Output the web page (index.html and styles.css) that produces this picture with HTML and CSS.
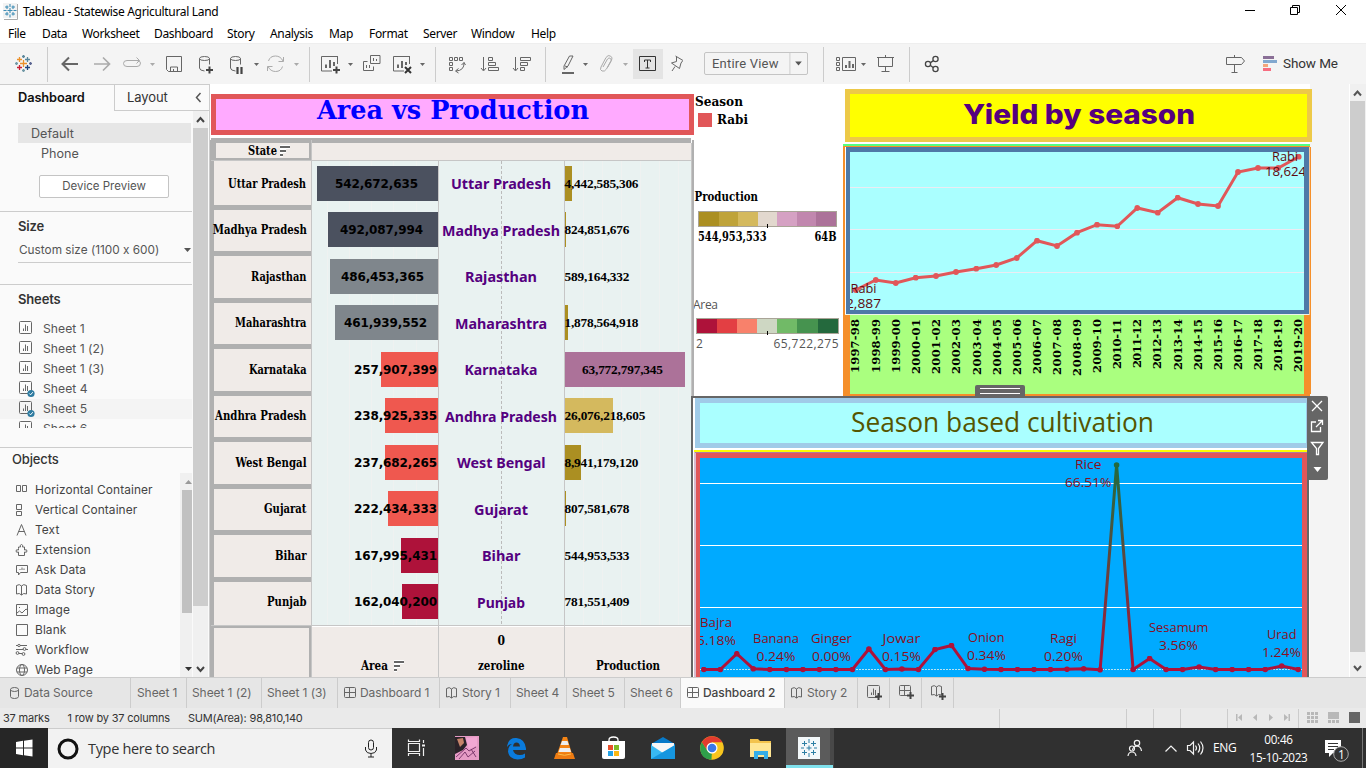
FILE: index.html
```html
<!DOCTYPE html>
<html lang="en">
<head>
<meta charset="utf-8">
<title>Tableau - Statewise Agricultural Land</title>
<link rel="stylesheet" href="styles.css">
</head>
<body>
<svg class="defs" width="0" height="0" aria-hidden="true">
  <defs>
    <g id="sheet" fill="none" stroke="#666"><rect x=".5" y=".5" width="12" height="12" rx="1"/><path d="M4.500 10V7.500M6.500 10V3.500M8.500 10V5"/></g>
    <g id="check"><circle cx="12" cy="12.500" r="3.600" fill="#2e7ba0"/><path d="M10.300 12.500l1.300 1.300 2.200-2.600" fill="none" stroke="#fff"/></g>
    <g id="dash" fill="none" stroke="#666"><rect x=".5" y=".5" width="11" height="10" rx="1"/><path d="M.5 5.500h11M5.500.5v10"/></g>
    <g id="story" fill="none" stroke="#666"><path d="M.5 1.500Q3.500-.5 5.500 2 7.500-.5 10.500 1.500V10Q7.500 8.500 5.500 11 3.500 8.500.5 10ZM5.500 2v9"/></g>
    <path id="plus" d="M0 3.500h7M3.500 0v7" fill="none" stroke="#444" stroke-width="2"/>
    <path id="down" d="M0 0h5l-2.500 3z"/>
    <path id="cross" d="M-2.500 0h5M0-2.500v5" fill="none"/>
    <g id="sortmark"><path d="M0 1h10M0 5h6M0 9h3" stroke="#fff" stroke-width="4"/><path d="M0 1h10M0 5h6M0 9h3" stroke="#666" stroke-width="2"/></g>
  </defs>
</svg>
<div class="window">
  <header class="titlebar">
    <svg width="18" height="18" viewBox="0 0 18 18"><path d="M0 0h14v15H0z" fill="#f3f3f3"/><path d="M14.500 1v15.500H1" stroke="#aaa" fill="none"/><g stroke="#3f8db5" stroke-width="1.100" transform="translate(-1 -1)"><path d="M5.500 8.500h5M8 6v5M8 2v3M8 12.500v3M1.500 8.500h3M11.500 8.500h3M3 5h3.500M5 3.500v3.500M9.500 5H13M11 3.500v3.500M3 12h3.500M5 10v3.500M9.500 12H13M11 10v3.500"/></g></svg>
    <span class="apptitle">Tableau - Statewise Agricultural Land</span>
    <svg class="winbtns" width="120" height="24" viewBox="1240 0 120 24" fill="none" stroke="#000"><path d="M1245 10.500h10M1290.500 7.500h7v7h-7zM1292.500 7V5.500h7v7H1298M1336 5l10 10M1346 5l-10 10"/></svg>
  </header>
  <nav class="menubar"><span>File</span><span>Data</span><span>Worksheet</span><span>Dashboard</span><span>Story</span><span>Analysis</span><span>Map</span><span>Format</span><span>Server</span><span>Window</span><span>Help</span></nav>
  <div class="toolbar">
    <svg width="48" height="41" viewBox="0 43 48 41"><g stroke-width="1.300"><path d="M20 63.500h7M23.500 60v7" stroke="#eb912c"/><use href="#cross" x="19.500" y="59.500" stroke="#eb912c"/><use href="#cross" x="27.500" y="59.500" stroke="#59879b"/><use href="#cross" x="19.500" y="67.500" stroke="#c72035"/><use href="#cross" x="27.500" y="67.500" stroke="#1f457e"/><path d="M22 56.500h3M23.500 55v3" stroke="#5b879b"/><path d="M22 70.500h3M23.500 69v3" stroke="#7199a6"/><path d="M15 63.500h3M16.500 62v3" stroke="#7199a6"/><path d="M29 63.500h3M30.500 62v3" stroke="#5c6692"/></g><path d="M47.500 47v35" stroke="#ccc"/></svg>
    <svg width="262" height="41" viewBox="48 43 262 41" fill="none" stroke="#666">
      <path d="M78 64H63M69 57.500L62.500 64l6.500 6.500" stroke-width="2"/><path d="M94 64h15M103 57.500l6.500 6.500-6.500 6.500" stroke="#aaa" stroke-width="1.700"/>
      <path d="M132 60.500h-5q-3.500 0-3.500 3t3.500 3h10q3.500 0 3.500-3.500 0-2.500-4-2.500M131 60.500h8M136.500 57.500l3 3-3 3" stroke="#aaa"/>
      <use href="#down" x="150" y="63" fill="#aaa" stroke="none"/>
      <path d="M166.500 56.500h15v15h-13l-2-2zM170.500 71v-4h7v4M173.500 71v-2"/>
      <g id="db"><ellipse cx="204.500" cy="58.500" rx="5" ry="2"/><path d="M199.500 58.500V68q0 2.500 5 3M209.500 58.500v6"/></g><use href="#plus" x="206" y="66.500"/>
      <use href="#db" x="31"/><path d="M237.500 67v7M241.500 67v7" stroke="#444" stroke-width="2.200"/>
      <use href="#down" x="254" y="63" fill="#666" stroke="none"/>
      <path d="M268.500 61q1.500-5 7-5 5 0 7.500 5M283.500 57v4.500h-5M282.500 66.500q-1.500 5-7 5-5 0-7.500-5M267.500 71v-4.500h5" stroke="#aaa"/>
      <use href="#down" x="294" y="63" fill="#aaa" stroke="none"/><path d="M309.500 47v35" stroke="#ccc"/>
    </svg>
    <svg width="126" height="41" viewBox="310 43 126 41" fill="none" stroke="#666">
      <path d="M337 56.500H321.500v14.500H332M337.500 56v8"/><path d="M326 68v-3.500M330 68v-8M334 66v-4" stroke-width="2"/><use href="#plus" x="333" y="66.500"/><use href="#down" x="348" y="63" fill="#666" stroke="none"/>
      <path d="M370.500 55.500h9.500v8h-9.500zM367.500 61.500h-4v9h10v-4M373.500 61v-3M376.500 61v-2M366.500 68v-3M369.500 68v-3"/>
      <path d="M409 56.500H393.500v14.500H404M409.500 56v8"/><path d="M398 68v-3.500M402 68v-7M406 65v-3" stroke-width="2"/><path d="M405 67l6 6M411 67l-6 6" stroke="#333" stroke-width="2"/><use href="#down" x="420" y="63" fill="#666" stroke="none"/><path d="M435.500 47v35" stroke="#ccc"/>
    </svg>
    <svg width="110" height="41" viewBox="436 43 110 41" fill="none" stroke="#666">
      <path d="M449.500 57.500h3v3h-3zM454.500 57.500h3v3h-3zM459.500 57.500h3v3h-3zM449.500 62.500h3v3h-3zM449.500 67.500h3v3h-3zM464 62.500q.5 8-8 8.500M461.500 65l2.500-2.500 1.500 2.500M458.500 68.500l-3 2.500 3 2"/>
      <path d="M483.500 57v13M481 68l2.500 3 2.500-3M488.500 57.500h4v3h-4zM488.500 62.500h7v3h-7zM488.500 67.500h10v3h-10z"/>
      <path d="M515.500 57v13M513 68l2.500 3 2.500-3M520.500 57.500h10v3h-10zM520.500 62.500h7v3h-7zM520.500 67.500h4v3h-4z"/><path d="M545.500 47v35" stroke="#ccc"/>
    </svg>
    <svg width="150" height="41" viewBox="546 43 150 41" fill="none" stroke="#666">
      <path d="M564 66l5.500-10h3.500l-5 10-4 3.500zM565 66l3 1"/><path d="M562 73h12" stroke-width="2"/><use href="#down" x="583" y="63" fill="#666" stroke="none"/>
      <path d="M603 67l4.500-8q1.500-2 3-.5t0 3l-4 7.500q-2 3-4.500 2t-1-4l5-9.500q2-3 4.500-1.500t1 4.500l-4 7" stroke="#aaa"/><use href="#down" x="623" y="63" fill="#aaa" stroke="none"/>
      <path d="M633 49h30v30h-30z" fill="#e4e4e4" stroke="none"/><path d="M639.500 56.500h16v14h-16zM644.500 62v-2h6v2M647.500 60v8M645.500 68h4" stroke="#333"/>
      <path d="M675.500 56l7.500 4.500M676.500 57v4.500l-5 1.500 8 5.500 1.500-5.500 1.500-2M675 66.500l-3 4.500"/>
    </svg>
    <div class="viewselect"><span>Entire View</span><svg width="18" height="22" viewBox="0 0 18 22"><path d="M.5 0v22" stroke="#ccc"/><path d="M6 9h7l-3.500 4z" fill="#555"/></svg></div>
    <svg width="142" height="41" viewBox="808 43 142 41" fill="none" stroke="#666">
      <path d="M823.500 47v35M909.500 47v35" stroke="#ccc"/><path d="M836.500 57.500h3v3h-3zM836.500 62.500h3v3h-3zM836.500 67.500h3v3h-3zM842.500 57.500h13v13h-13z"/><path d="M846 68v-3M849.500 68v-7M853 68v-4" stroke-width="2"/><use href="#down" x="861" y="63" fill="#666" stroke="none"/>
      <path d="M877 57.500h17M878.500 58v8.500h14V58M885.500 55v2M885.500 67v4M881.500 71.500h8"/>
      <g stroke="#444" stroke-width="1.300"><circle cx="928" cy="64" r="2.600"/><circle cx="935.500" cy="59" r="2.600"/><circle cx="935.500" cy="69" r="2.600"/><path d="M930.500 62.600l2.600-1.700M930.500 65.500l2.600 2"/></g>
    </svg>
    <span class="grow"></span>
    <svg width="60" height="41" viewBox="1223 43 60 41" fill="none" stroke="#666"><path d="M1226.500 57.500h15l3 3.500-3 3.500h-15zM1234.500 55v2.500M1234.500 65v7M1231.500 72.500h6"/><g stroke-width="3"><path d="M1263 57.500h11" stroke="#8a6f96"/><path d="M1263 61.500h14" stroke="#82a8cf"/><path d="M1263 65.500h5" stroke="#f3a57b"/><path d="M1263 69.500h8" stroke="#f76d80"/></g></svg>
    <span class="showme">Show Me</span>
  </div>

  <main class="workspace">
    <aside class="side">
      <div class="sidetabs"><b>Dashboard</b><span>Layout</span><svg width="15" height="25" viewBox="0 0 15 25"><path d="M6.500 8L2.500 12.500 6.500 17" fill="none" stroke="#555" stroke-width="1.500"/></svg></div>
      <div class="sidebody">
        <div class="sidepanes">
          <section class="devices"><div class="default">Default</div><div class="phone">Phone</div><div class="preview">Device Preview</div></section>
          <section class="size"><h3>Size</h3><div class="sizebox"><span>Custom size (1100 x 600)</span><svg width="7" height="4"><path d="M0 0h7l-3.500 4z" fill="#555"/></svg></div></section>
          <section class="sheets"><h3>Sheets</h3>
            <div class="sheetlist">
              <div><svg width="16" height="17"><use href="#sheet"/></svg>Sheet 1</div>
              <div><svg width="16" height="17"><use href="#sheet"/></svg>Sheet 1 (2)</div>
              <div><svg width="16" height="17"><use href="#sheet"/></svg>Sheet 1 (3)</div>
              <div><svg width="16" height="17"><use href="#sheet"/><use href="#check"/></svg>Sheet 4</div>
              <div class="hover"><svg width="16" height="17"><use href="#sheet"/><use href="#check"/></svg>Sheet 5</div>
              <div><svg width="16" height="17"><use href="#sheet"/></svg>Sheet 6</div>
            </div>
          </section>
          <section class="objects"><h3>Objects</h3>
            <div class="objwrap">
              <div class="objlist">
                <div><svg viewBox="0 0 13 14"><path d="M1.500 2.500h4v6h-4zM7.500 2.500h4v6h-4z"/></svg>Horizontal Container</div>
                <div><svg viewBox="0 0 13 14"><path d="M1.500 1.500h5v5h-5zM1.500 8.500h5v4h-5z"/></svg>Vertical Container</div>
                <div><svg viewBox="0 0 13 14"><path d="M2 12.500L6.500 1.500 11 12.500M3.500 8.500h6"/></svg>Text</div>
                <div><svg viewBox="0 0 13 14"><path d="M3.500 5.500V4h2q-1-2 1-2.500 2 .5 1 2.500h2v3q2.500-1 2.500 1t-2.500 1v3.500h-6V9q-2.500 1-2.500-1t2.500-1z"/></svg>Extension</div>
                <div><svg viewBox="0 0 13 14"><path d="M1.500 2.500h11v7h-7l-2 2.500V9.500h-2zM5 7V6M7 7V4.500M9 7V5.500"/></svg>Ask Data</div>
                <div><svg viewBox="0 0 13 14"><use href="#story" x="1" y="1"/></svg>Data Story</div>
                <div><svg viewBox="0 0 13 14"><path d="M1.500 1.500h11v11h-11zM2 10l2.500-2 2.500 2 4-4 1.500 1M4 4.500h1"/></svg>Image</div>
                <div><svg viewBox="0 0 13 14"><path d="M1.500 1.500h11v11h-11z"/></svg>Blank</div>
                <div><svg viewBox="0 0 13 14"><path d="M1 2.500h2M5 2.500h7M1 6.500h7M11 6.500h2M4 10.500h3"/><circle cx="4" cy="2.500" r="1.200"/><circle cx="9.500" cy="6" r="1.400"/><circle cx="2.500" cy="10" r="1.400"/><circle cx="8.500" cy="11" r="1.400"/></svg>Workflow</div>
                <div><svg viewBox="0 0 13 14"><circle cx="7" cy="7" r="5.500"/><ellipse cx="7" cy="7" rx="2.500" ry="5.500"/><path d="M2 5h10M2 9h10"/></svg>Web Page</div>
              </div>
              <svg class="innerscroll" width="12" height="204"><path d="M0 0h12v204H0z" fill="#f0f0f0"/><path d="M2 17h10v123H2z" fill="#c1c1c1"/><path d="M5 11h7L8.500 7z" fill="#999"/><path d="M5 194h7l-3.500 4z" fill="#333"/></svg>
            </div>
          </section>
        </div>
        <svg width="17" height="566" viewBox="0 0 17 566"><path d="M1 0h15v566H1z" fill="#f0f0f0"/><path d="M1 17h15v478H1z" fill="#cdcdcd"/><path d="M5 11l3.500-4 3.500 4M5 556l3.500 4 3.500-4" fill="none" stroke="#444" stroke-width="2"/></svg>
      </div>
    </aside>

    <div class="canvas">
      <div class="leftcol">
        <div class="areatitle"><svg width="473" height="31" viewBox="216 99 473 31"><text class="dserif" x="317" y="119" font-size="25.500" fill="#00f" textLength="272" lengthAdjust="spacingAndGlyphs">Area vs Production</text></svg></div>
        <svg class="table" width="484" height="540" viewBox="210 137 484 540">
          <path d="M211 138h480v5H211zM210 140h4v537h-4zM692 140h2.500v256H692z" fill="#b0b0b0"/>
          <path d="M214 143h97v534h-97z" fill="#b0b0b0"/>
          <g fill="#f0ebe8"><path d="M216 143h93v15h-93zM312 143h379v17H312zM312 627h379v50H312zM214 628h95v49h-95z"/>
          <path d="M214 161h97v44h-97zM214 210h97v41h-97zM214 256h97v42h-97zM214 303h97v41h-97zM214 349h97v42h-97zM214 396h97v41h-97zM214 442h97v42h-97zM214 489h97v41h-97zM214 535h97v42h-97zM214 582h97v43h-97z"/></g>
          <path d="M312 161h379v464H312z" fill="#e9f2f1"/>
          <path d="M327.500 161v464M349.500 161v464M371.500 161v464M393.500 161v464M416.500 161v464M583.500 161v464M602.500 161v464M621.500 161v464M640.500 161v464M659.500 161v464M678.500 161v464" stroke="#eff2f1"/>
          <path d="M501.500 161v464" stroke="#bbb" stroke-dasharray="3 2"/>
          <path d="M211 160.500h480M211 625.500h480M311.500 140v537M438.500 161v516M564.500 161v516M691.500 143v534" stroke="#c6c6c6"/>
          <g fill="#4b515f"><path d="M317 166h121v35H317zM328 212h110v35H328z"/></g>
          <g fill="#7f868c"><path d="M330 259h108v35H330zM335 305h103v35H335z"/></g>
          <g fill="#ef584f"><path d="M381 352h57v35h-57zM385 398h53v35h-53zM385 445h53v35h-53zM388 491h50v35h-50z"/></g>
          <g fill="#ae123a"><path d="M401 538h37v35h-37zM402 584h36v35h-36z"/></g>
          <g fill="#ab8f22"><path d="M565 166h7v35h-7zM565 212h1v35h-1zM565 305h3v35h-3zM565 445h16v35h-16zM565 491h1v35h-1z"/></g>
          <path d="M565 352h120v35H565z" fill="#ac7299"/><path d="M565 398h48v35h-48z" fill="#d4b95e"/>
          <g class="dserif" font-size="12.300"><text x="248" y="155" textLength="29" lengthAdjust="spacingAndGlyphs">State</text>
          <text x="228" y="188" textLength="78" lengthAdjust="spacingAndGlyphs">Uttar Pradesh</text><text x="212.800" y="234" textLength="94" lengthAdjust="spacingAndGlyphs">Madhya Pradesh</text>
          <text x="251" y="281" textLength="55.500" lengthAdjust="spacingAndGlyphs">Rajasthan</text><text x="235" y="327" textLength="71.500" lengthAdjust="spacingAndGlyphs">Maharashtra</text><text x="249" y="374" textLength="57.500" lengthAdjust="spacingAndGlyphs">Karnataka</text><text x="215" y="420" textLength="91.500" lengthAdjust="spacingAndGlyphs">Andhra Pradesh</text><text x="235.500" y="467" textLength="71" lengthAdjust="spacingAndGlyphs">West Bengal</text><text x="264" y="513" textLength="42.500" lengthAdjust="spacingAndGlyphs">Gujarat</text><text x="275" y="560" textLength="31.500" lengthAdjust="spacingAndGlyphs">Bihar</text><text x="267" y="606" textLength="39.500" lengthAdjust="spacingAndGlyphs">Punjab</text>
          <text x="361" y="670" textLength="27" lengthAdjust="spacingAndGlyphs">Area</text><text x="478" y="670" textLength="46.500" lengthAdjust="spacingAndGlyphs">zeroline</text><text x="596" y="670" textLength="64" lengthAdjust="spacingAndGlyphs">Production</text><text x="497.500" y="645" textLength="7.500" lengthAdjust="spacingAndGlyphs">0</text></g>
          <use href="#sortmark" x="280" y="146"/><use href="#sortmark" x="394" y="661"/>
          <g class="dsans" font-size="12"><text x="335" y="188" textLength="83">542,672,635</text><text x="340" y="234" textLength="83">492,087,994</text><text x="341" y="281" textLength="83">486,453,365</text><text x="344" y="327" textLength="83">461,939,552</text><text x="354" y="374" textLength="83">257,907,399</text><text x="354" y="420" textLength="83">238,925,335</text><text x="354" y="467" textLength="83">237,682,265</text><text x="354" y="513" textLength="83">222,434,333</text><text x="354" y="560" textLength="83">167,995,431</text><text x="354" y="606" textLength="83">162,040,200</text></g>
          <g class="nsans" font-size="15" fill="#550080"><text x="451" y="189" textLength="100" lengthAdjust="spacingAndGlyphs">Uttar Pradesh</text><text x="442" y="236" textLength="118" lengthAdjust="spacingAndGlyphs">Madhya Pradesh</text><text x="465" y="282" textLength="72" lengthAdjust="spacingAndGlyphs">Rajasthan</text><text x="455" y="329" textLength="92" lengthAdjust="spacingAndGlyphs">Maharashtra</text><text x="464.500" y="375" textLength="73" lengthAdjust="spacingAndGlyphs">Karnataka</text><text x="445" y="422" textLength="112" lengthAdjust="spacingAndGlyphs">Andhra Pradesh</text><text x="457" y="468" textLength="88.500" lengthAdjust="spacingAndGlyphs">West Bengal</text><text x="474" y="515" textLength="54" lengthAdjust="spacingAndGlyphs">Gujarat</text><text x="482" y="561" textLength="38.500" lengthAdjust="spacingAndGlyphs">Bihar</text><text x="477" y="608" textLength="48" lengthAdjust="spacingAndGlyphs">Punjab</text></g>
          <g class="times" font-size="13.300"><text x="564.500" y="188" textLength="74">4,442,585,306</text><text x="564.500" y="234" textLength="65">824,851,676</text><text x="564.500" y="281" textLength="65">589,164,332</text><text x="564.500" y="327" textLength="74">1,878,564,918</text><text x="582" y="374" textLength="81">63,772,797,345</text><text x="564.500" y="420" textLength="81">26,076,218,605</text><text x="564.500" y="467" textLength="74">8,941,179,120</text><text x="564.500" y="513" textLength="65">807,581,678</text><text x="564.500" y="560" textLength="65">544,953,533</text><text x="564.500" y="606" textLength="65">781,551,409</text></g>
        </svg>
      </div>
      <div class="rightcol">
        <div class="toprow">
          <svg width="152" height="312" viewBox="691 84 152 312">
            <g class="dserif" font-size="12.800"><text x="695" y="106" textLength="48" lengthAdjust="spacingAndGlyphs">Season</text><text x="717" y="124" textLength="31" lengthAdjust="spacingAndGlyphs">Rabi</text><text x="694.500" y="201" font-size="12.300" textLength="63.500" lengthAdjust="spacingAndGlyphs">Production</text><text x="698" y="241" font-size="12" textLength="68.500" lengthAdjust="spacingAndGlyphs">544,953,533</text><text x="814.500" y="241" font-size="12" textLength="22" lengthAdjust="spacingAndGlyphs">64B</text></g>
            <path d="M698 113h14v14h-14z" fill="#e15759"/>
            <path d="M698 211h139v16H698z" fill="#a9a497"/><path d="M699 212h20v14h-20z" fill="#ab8f22"/><path d="M719 212h19v14h-19z" fill="#bfa33a"/><path d="M738 212h20v14h-20z" fill="#d4b95e"/><path d="M758 212h19v14h-19z" fill="#e2d8ce"/><path d="M777 212h20v14h-20z" fill="#d5a1c3"/><path d="M797 212h19v14h-19z" fill="#c187ae"/><path d="M816 212h20v14h-20z" fill="#ac7299"/>
            <path d="M696 318h143v16H696z" fill="#a9a497"/><path d="M697 319h20v14h-20z" fill="#ae123a"/><path d="M717 319h20v14h-20z" fill="#e33f43"/><path d="M737 319h20v14h-20z" fill="#f8816b"/><path d="M757 319h20v14h-20z" fill="#ced7c3"/><path d="M777 319h20v14h-20z" fill="#71ba67"/><path d="M797 319h21v14h-21z" fill="#46934f"/><path d="M818 319h20v14h-20z" fill="#24693d"/>
            <path d="M767.500 224v4M767.500 331v4" stroke="#000"/>
            <g class="osans" font-size="12" fill="#555"><text x="693" y="309" textLength="25">Area</text><text x="696" y="348">2</text><text x="773.500" y="348" textLength="65">65,722,275</text></g>
          </svg>
          <div class="yield">
            <div class="yieldtitle"><svg width="457" height="43" viewBox="850 94 457 43"><text class="black" x="963" y="124" font-size="26.500" fill="#55007f" textLength="232" lengthAdjust="spacingAndGlyphs">Yield by season</text></svg></div>
            <svg width="469" height="254" viewBox="843 142 469 254">
              <defs><marker id="m1" markerWidth="6" markerHeight="6" refX="3" refY="3" markerUnits="userSpaceOnUse"><circle cx="3" cy="3" r="2.900" fill="#e15759"/></marker><clipPath id="c1"><path d="M850 144h454v250H850z"/></clipPath></defs>
              <path d="M843 144h467v2H843z" fill="#55ff7f"/><path d="M843 146h467v250H843z" fill="#f58f2a"/><path d="M1310 147h1v247h-1z" fill="#f58f2a"/><path d="M845 147h464.500v168H845z" fill="#fff"/><path d="M846 147h463v167H846z" fill="#4e79a7"/><path d="M850 152h454v158H850z" fill="#aff"/>
              <path d="M850 315h454v79H850z" fill="#aaff7f"/><path d="M845 314.500h464" stroke="#eef5e8"/>
              <path d="M850 187.500h454M850 229.500h454M850 272.500h454" stroke="#ececf3"/>
              <g clip-path="url(#c1)"><polyline points="855.700,290 875.700,280 895.700,283 915.700,277.700 936,276 956,272 976.300,268.700 996.300,265 1016.700,258 1037,240.700 1057,246 1077,232.700 1097,224.700 1117.300,226.300 1137.300,208 1157.700,212.700 1177.700,197.700 1198,204 1218,206 1238,172 1258,168 1278.300,168 1298.700,156.700" fill="none" stroke="#e15759" stroke-width="3" marker-start="url(#m1)" marker-mid="url(#m1)" marker-end="url(#m1)"/>
              <g class="label" font-size="13" fill="#5c0a10"><text x="850.500" y="293" textLength="26" lengthAdjust="spacingAndGlyphs">Rabi</text><text x="846" y="308" textLength="35" lengthAdjust="spacingAndGlyphs">2,887</text><text x="1272" y="161" textLength="26" lengthAdjust="spacingAndGlyphs">Rabi</text><text x="1265" y="176" textLength="41" lengthAdjust="spacingAndGlyphs">18,624</text></g>
              <g class="dserif" font-size="11.500"><text transform="translate(859 373) rotate(-90)" textLength="54">1997-98</text><text transform="translate(880 373) rotate(-90)" textLength="54">1998-99</text><text transform="translate(900 373) rotate(-90)" textLength="54">1999-00</text><text transform="translate(920 374) rotate(-90)" textLength="55">2000-01</text><text transform="translate(940 374) rotate(-90)" textLength="55">2001-02</text><text transform="translate(960 374) rotate(-90)" textLength="55">2002-03</text><text transform="translate(981 375) rotate(-90)" textLength="56">2003-04</text><text transform="translate(1001 375) rotate(-90)" textLength="56">2004-05</text><text transform="translate(1021 375) rotate(-90)" textLength="56">2005-06</text><text transform="translate(1041 374) rotate(-90)" textLength="55">2006-07</text><text transform="translate(1061 375) rotate(-90)" textLength="56">2007-08</text><text transform="translate(1081 376) rotate(-90)" textLength="57">2008-09</text><text transform="translate(1101 373) rotate(-90)" textLength="54">2009-10</text><text transform="translate(1121 369) rotate(-90)" textLength="50">2010-11</text><text transform="translate(1141 368) rotate(-90)" textLength="49">2011-12</text><text transform="translate(1161 369) rotate(-90)" textLength="50">2012-13</text><text transform="translate(1182 370) rotate(-90)" textLength="51">2013-14</text><text transform="translate(1202 370) rotate(-90)" textLength="51">2014-15</text><text transform="translate(1222 370) rotate(-90)" textLength="51">2015-16</text><text transform="translate(1242 370) rotate(-90)" textLength="51">2016-17</text><text transform="translate(1262 370) rotate(-90)" textLength="51">2017-18</text><text transform="translate(1282 371) rotate(-90)" textLength="52">2018-19</text><text transform="translate(1302 372) rotate(-90)" textLength="53">2019-20</text></g></g>
              <path d="M975 396v-9q0-2 2-2h46q2 0 2 2v9z" fill="#666"/><path d="M980 388.500h40M980 393.500h40" stroke="#fff"/>
            </svg>
          </div>
        </div>
        <svg class="season" width="640" height="281" viewBox="691 396 640 281">
          <defs><marker id="m2" markerWidth="6" markerHeight="6" refX="3" refY="3" markerUnits="userSpaceOnUse"><circle cx="3" cy="3" r="2.800" fill="#ae123a"/></marker><linearGradient id="g" gradientUnits="userSpaceOnUse" x1="0" y1="465" x2="0" y2="669"><stop offset="0" stop-color="#24693d"/><stop offset=".25" stop-color="#3f5c3f"/><stop offset="1" stop-color="#ae123a"/></linearGradient><clipPath id="c2"><path d="M700 458h602v219H700z"/></clipPath></defs>
          <path d="M691 396h618v281H691z" fill="#666"/><path d="M693 398h615v279H693z" fill="#fff"/>
          <path d="M695 398h613v50H695z" fill="#a0cbe8"/><path d="M700 403h606v40H700z" fill="#aff"/>
          <text class="label" x="851" y="432" font-size="26.500" fill="#550" textLength="303" lengthAdjust="spacingAndGlyphs">Season based cultivation</text>
          <path d="M694 450h613v2H694z" fill="#ff0"/><path d="M694.500 452h612.500v225H694.500z" fill="#b07aa1"/><path d="M695.500 453h.8v224h-.8z" fill="#fff"/><path d="M696 453h611v224H696z" fill="#e15759"/><path d="M700 458h602v219H700z" fill="#0af"/><path d="M1307.500 480v197" stroke="#666"/>
          <path d="M700 483.500h602M700 545.500h602M700 607.500h602" stroke="#fff"/><path d="M700 669.500h602" stroke="#b6e3f2" stroke-dasharray="2 1"/>
          <g clip-path="url(#c2)" fill="none" stroke="#ae123a" stroke-width="3"><polyline marker-start="url(#m2)" marker-mid="url(#m2)" marker-end="url(#m2)" points="703.800,669.500 720.300,669.500 736.800,653.700 753.300,668.800 769.800,669.500 786.400,669.500 802.900,669.500 819.400,669.500 835.900,669.500 852.400,669.500 868.900,649 885.400,669.500 901.900,669 918.400,669.500 935,649.500 951.500,645.500 968,668.500 984.500,669.300 1001,669.500 1017.500,669.500 1034,669.500 1050.500,669.500 1067,669.300 1083.600,668.800 1100.100,669.800"/><polyline marker-start="url(#m2)" marker-mid="url(#m2)" marker-end="url(#m2)" points="1133.100,669.500 1149.600,658.500 1166.100,669.500 1182.600,669.500 1199.100,667 1215.700,669.500 1232.200,669.500 1248.700,669.500 1265.200,669.500 1281.700,666 1298.200,669.500"/><path d="M1100.100 669.800L1116.600 465 1133.100 669.500" stroke="url(#g)" stroke-linejoin="round"/><circle cx="1116.600" cy="465" r="2.800" fill="#24693d" stroke="none"/></g>
          <g class="label" font-size="13" fill="#8a0f22" clip-path="url(#c2)"><text x="700" y="627" textLength="32" lengthAdjust="spacingAndGlyphs">Bajra</text><text x="697" y="645" textLength="39" lengthAdjust="spacingAndGlyphs">5.18%</text><text x="753" y="643" textLength="46" lengthAdjust="spacingAndGlyphs">Banana</text><text x="756.500" y="661" textLength="39" lengthAdjust="spacingAndGlyphs">0.24%</text><text x="811" y="643" textLength="41" lengthAdjust="spacingAndGlyphs">Ginger</text><text x="812" y="661" textLength="39" lengthAdjust="spacingAndGlyphs">0.00%</text><text x="882.500" y="643" textLength="38" lengthAdjust="spacingAndGlyphs">Jowar</text><text x="882" y="661" textLength="39" lengthAdjust="spacingAndGlyphs">0.15%</text><text x="968" y="642" textLength="36.500" lengthAdjust="spacingAndGlyphs">Onion</text><text x="967" y="660" textLength="39" lengthAdjust="spacingAndGlyphs">0.34%</text><text x="1050" y="643" textLength="27" lengthAdjust="spacingAndGlyphs">Ragi</text><text x="1044" y="661" textLength="39" lengthAdjust="spacingAndGlyphs">0.20%</text><text x="1075" y="469" textLength="26.500" lengthAdjust="spacingAndGlyphs">Rice</text><text x="1065" y="487" textLength="46.500" lengthAdjust="spacingAndGlyphs">66.51%</text><text x="1149" y="632" textLength="59.500" lengthAdjust="spacingAndGlyphs">Sesamum</text><text x="1159" y="650" textLength="39" lengthAdjust="spacingAndGlyphs">3.56%</text><text x="1267" y="639" textLength="29.500" lengthAdjust="spacingAndGlyphs">Urad</text><text x="1262" y="657" textLength="39" lengthAdjust="spacingAndGlyphs">1.24%</text></g>
          <path d="M1307 396h19q2 0 2 2v80q0 2-2 2h-19z" fill="#666"/><g fill="none" stroke="#fff" stroke-width="1.300"><path d="M1312 401l10 10M1322 401l-10 10M1316 422h-4.500v9.500h9V427M1316 427l6.500-6.500M1318 420.500h4.500v4.500M1311.500 442.500h11.500l-4.500 6v6h-2v-6z"/></g><path d="M1313.500 467h8l-4 5z" fill="#fff"/>
        </svg>
      </div>
    </div>
    <svg class="mainscroll" width="17" height="593" viewBox="0 0 17 593"><path d="M0 0h1v593H0z" fill="#fff"/><path d="M1 0h16v593H1z" fill="#f0f0f0"/><path d="M1 17h15v551H1z" fill="#cdcdcd"/><path d="M5 11.500L8.500 7.500l3.500 4M5 582l3.500 4 3.500-4" fill="none" stroke="#555" stroke-width="2"/></svg>
  </main>

  <div class="tabs">
    <span class="ds"><svg width="10" height="13" fill="none" stroke="#666"><ellipse cx="4.500" cy="2.500" rx="4" ry="2"/><path d="M.5 2.500v7q0 2 4 2t4-2v-7"/></svg>Data Source</span><span>Sheet 1</span><span>Sheet 1 (2)</span><span>Sheet 1 (3)</span>
    <span><svg width="12" height="12"><use href="#dash"/></svg>Dashboard 1</span><span><svg width="12" height="12"><use href="#story"/></svg>Story 1</span><span>Sheet 4</span><span>Sheet 5</span><span>Sheet 6</span>
    <span class="active"><svg width="12" height="12"><use href="#dash"/></svg>Dashboard 2</span><span><svg width="12" height="12"><use href="#story"/></svg>Story 2</span>
    <span class="new"><svg width="16" height="16"><use href="#sheet"/><use href="#plus" x="8" y="8"/></svg></span><span class="new"><svg width="16" height="16"><use href="#dash"/><use href="#plus" x="8" y="7"/></svg></span><span class="new"><svg width="16" height="16"><use href="#story"/><use href="#plus" x="8" y="8"/></svg></span>
  </div>
  <div class="status"><span>37 marks</span><span>1 row by 37 columns</span><span>SUM(Area): 98,810,140</span>
    <svg width="367" height="20" viewBox="999 708 367 20"><path d="M999.500 709v19M1126.500 709v19M1153.500 709v19M1180.500 709v19M1227.500 709v19M1298.500 709v19" stroke="#ccc"/><g fill="#b8b8b8"><path d="M1236 714h1.500v7h-1.500zM1242 714v7l-4-3.500zM1257 714v7l-4-3.500zM1269 714v7l4-3.500zM1284 714v7l4-3.500zM1288.500 714h1.500v7h-1.500z"/><path d="M1307 712h3v3h-3zM1311 712h3v3h-3zM1315 712h3v3h-3zM1307 716h3v3h-3zM1311 716h3v3h-3zM1315 716h3v3h-3zM1307 720h3v3h-3zM1311 720h3v3h-3zM1315 720h3v3h-3zM1328 712h11v7h-11zM1328 720h3v3h-3zM1332 720h3v3h-3zM1336 720h3v3h-3z"/></g><path d="M1349 712h11v11h-11z" fill="#666"/></svg>
  </div>
  <footer class="taskbar">
    <svg width="48" height="40" viewBox="0 728 48 40"><path d="M0 728h48v40H0z" fill="#262626"/><path d="M16 742l7-1.200v6.700h-7zM24 740.700l8.500-1.300v8.100H24zM16 748.500h7v6.700l-7-1.200zM24 748.500h8.500v8.100l-8.500-1.300z" fill="#fff"/></svg>
    <div class="search"><svg width="22" height="22"><circle cx="11" cy="11" r="9" fill="none" stroke="#111" stroke-width="3"/></svg><span>Type here to search</span><svg width="14" height="20" fill="none" stroke="#222"><rect x="4.500" y="1" width="5" height="10" rx="2.500"/><path d="M1.500 8v3q1 3.500 5.500 3.500t5.500-3.500V8M7 15v3M4 18h6"/></svg></div>
    <svg width="444" height="40" viewBox="392 728 444 40">
      <g fill="none" stroke="#eee" stroke-width="1.200"><path d="M408.500 743.500h11v8h-11zM408.500 739.500v2h11v-2M408.500 756v-2.500h11v2.500M423.500 740v3M423.500 748v8"/><path d="M422 745.500h3" stroke-width="2"/></g>
      <path d="M455 736h24v24h-24z" fill="#e69bc5"/><path d="M455 737h10l2 8-4 5-8 4z" fill="#2a2228"/><path d="M457 739l6-1 1 5-4 4z" fill="#c58369"/><path d="M466 738l11-1v9l-8 3z" fill="#f2a7d3"/><path d="M456 757l10-9 3 3 7-4M459 759l6-7 3 5 7-6M471 749l5 8" fill="none" stroke="#733065" stroke-width=".9"/>
      <path d="M507 746Q509 737 516.500 738 525 739 526 748.500v1.500H513q1 5 7 5 2.500 0 5-1.500v4q-3 2-7.500 2-8.500-.5-9.500-8 0-5.500 4-7.500-4 .5-5 3M513 746.500h7q-.5-4-3.500-4t-3.500 4" fill="#0a7bdc" fill-rule="evenodd"/>
      <path d="M565 737l-2 0-6 17h15l-5-17z" fill="#f58414"/><path d="M562 741l5.500 0 1.300 4h-8.200zM560 748h9.800l1.200 4h-12.500z" fill="#eee"/><path d="M556 753h17l2 6h-21z" fill="#ed7b12"/><path d="M558 754q6.500 2.500 13 0" stroke="#fbc04c" fill="none"/>
      <path d="M602 741h23v16q0 2-2 2h-19q-2 0-2-2z" fill="#fff"/><path d="M609 741v-1q0-3 4.500-3t4.500 3v1" stroke="#fff" fill="none" stroke-width="1.300"/><path d="M608 745h5v5h-5z" fill="#e8502c"/><path d="M614 745h5v5h-5z" fill="#80bb28"/><path d="M608 751h5v5h-5z" fill="#24a3e6"/><path d="M614 751h5v5h-5z" fill="#fbb814"/>
      <path d="M651 744l12-7 12 7v15h-24z" fill="#087ac9"/><path d="M652 743h22v6l-11 5-11-5z" fill="#f7f7f7"/><path d="M651 745l12 8 12-8v14h-24z" fill="#38b9f3"/><path d="M651 759l24-14v14z" fill="#1696df"/>
      <circle cx="712" cy="748" r="11.800" fill="#f7c51e"/><path d="M702 742q3.500-5.800 10-5.800 7 0 10.500 6H712z" fill="#e33b2f"/><path d="M712 742h-6l6 6-.5 11.700Q700.500 759 700.200 748q0-3.500 1.800-6l5 8 5 4.500z" fill="#2f9f4a"/><path d="M701.800 742l5.200 8 5-8z" fill="#e33b2f"/><circle cx="712" cy="748" r="5.500" fill="#fff"/><circle cx="712" cy="748" r="4.300" fill="#3b78e7"/>
      <path d="M750 739h8l2 2h11v16h-21z" fill="#f3c34d"/><path d="M750 743h21v14h-21z" fill="#ffe694"/><path d="M754 751h14v8h-4v-4h-6v4h-4z" fill="#35aee8"/>
      <path d="M786 728h44v40h-44z" fill="#5b5b5b"/><path d="M830 728h4v40h-4z" fill="#484848"/><path d="M786 765h47v3h-47z" fill="#80e1ec"/><path d="M798 737h22v22h-22z" fill="#f3f8fa"/><g stroke="#2d7fa4"><path d="M809 739v4M809 753v4M801 748h3M814 748h3M806.500 748h5M809 745.500v5M802 743.500h5M804.500 741v5M811 743.500h5M813.500 741v5M802 752.500h5M804.500 750v5M811 752.500h5M813.500 750v5"/></g>
    </svg>
    <span class="grow"></span>
    <svg width="83" height="40" viewBox="1126 728 83 40" fill="none" stroke="#f2f2f2" stroke-width="1.200"><circle cx="1137" cy="743" r="2.700"/><path d="M1132.500 750q.5-3.500 4.500-4 4 .5 4.500 5"/><circle cx="1132" cy="748.500" r="2.500"/><path d="M1128 756q.5-4 4-4t4 4M1165.500 751.500l5.500-5.500 5.500 5.500M1187.500 745.500h2.500l3.500-3.500v12l-3.500-3.500h-2.500zM1195.500 745.500q2 2.500 0 5M1198 743.500q3.500 4.500 0 9M1200.500 741.500q5 6.500 0 13"/></svg>
    <span class="eng">ENG</span>
    <div class="clock"><span>00:46</span><span>15-10-2023</span></div>
    <svg width="46" height="40" viewBox="1320 728 46 40"><path d="M1325 740h16v13h-8l-4 4v-4h-4z" fill="#fff"/><path d="M1328 743.500h10M1328 746.500h10M1328 749.500h6" stroke="#333"/><circle cx="1341" cy="754" r="7.300" fill="#333" stroke="#aaa"/><text class="osans" x="1338" y="759" font-size="12" fill="#fff">1</text><path d="M1362.500 728v40" stroke="#777"/></svg>
  </footer>
</div>
</body>
</html>
```
FILE: styles.css
```css
* { box-sizing: border-box; }
body { margin: 0; font-family: "Open Sans", sans-serif; overflow: hidden; }
svg { display: block; flex: none; }
.defs { position: absolute; }
.window { width: 1366px; height: 768px; display: flex; flex-direction: column; background: #fff; overflow: hidden; }
.grow { flex: 1; }

.titlebar { height: 24px; display: flex; align-items: center; padding-left: 3px; font-size: 12px; color: #000; }
.apptitle { margin: -2px 0 0 2px; flex: 1; letter-spacing: -.32px; font-family: "Noto Sans", sans-serif; }
.winbtns { margin-right: 6px; }
.menubar { height: 19px; display: grid; grid-template-columns: 34px 40px 72px 73px 43px 59px 40px 54px 48px 60px 40px; padding-left: 8px; font: 12px/19px "Noto Sans", sans-serif; letter-spacing: -.35px; }
.toolbar { height: 41px; background: #f4f4f4; display: flex; border-top: 1px solid #eee; }
.toolbar > svg { margin-top: -1px; }
.viewselect { width: 104px; height: 23px; margin: 8px 0 0 8px; border: 1px solid #c4c4c4; border-radius: 2px; display: flex; justify-content: space-between; font: 13px/21px Roboto, sans-serif; color: #555; padding-left: 7px; letter-spacing: .2px; }
.viewselect svg { height: 21px; }
.showme { width: 83px; font: 13.500px/39px Roboto, sans-serif; color: #333; letter-spacing: -.1px; }

.workspace { height: 593px; display: flex; background: #f4f4f4; }
.side { width: 210px; border-top: 1px solid #ccc; border-right: 1px solid #ccc; background: #fafafa; font-family: Inter, sans-serif; color: #555; font-feature-settings: "calt" 0; }
.sidetabs { height: 26px; display: flex; line-height: 25px; font-size: 13px; color: #333; }
.sidetabs b { width: 114px; padding-left: 18px; color: #111; font-weight: 600; font-size: 12.800px; letter-spacing: -.1px; }
.sidetabs span { flex: 1; border-left: 1px solid #ccc; border-bottom: 1px solid #ccc; padding-left: 12px; letter-spacing: -.1px; }
.sidetabs svg { border-bottom: 1px solid #ccc; height: 26px; }
.sidebody { display: flex; height: 566px; }
.sidepanes { width: 192px; height: 566px; overflow: hidden; }
h3 { margin: 0; font-size: 13px; font-weight: 600; line-height: 20px; color: #333; letter-spacing: -.15px; }
.devices { height: 101px; padding: 12px 1px 0 18px; border-bottom: 1px solid #ccc; font-size: 12.600px; line-height: 21px; }
.default { background: #e6e6e6; padding-left: 13px; height: 20px; }
.phone { padding-left: 23px; height: 20px; }
.preview { width: 130px; height: 23px; margin: 12px 0 0 21px; border: 1px solid #c4c4c4; border-radius: 2px; background: #fff; text-align: center; font-size: 11.500px; line-height: 21px; }
.size { height: 73px; padding: 4px 1px 0 18px; border-bottom: 1px solid #ccc; }
.sizebox { height: 26px; margin-top: 1px; border-bottom: 1px solid #ccc; display: flex; align-items: center; justify-content: space-between; font-size: 11.800px; padding-left: 1px; }
.sheets { height: 163px; padding-top: 4px; border-bottom: 1px solid #ccc; }
.sheets h3 { padding-left: 18px; }
.sheetlist { margin-top: 10px; height: 109px; overflow: hidden; font-size: 12.200px; line-height: 22px; }
.sheetlist div { height: 20px; display: flex; align-items: center; padding-left: 19px; gap: 8px; }
.sheetlist .hover { background: #f4f4f4; }
.objects h3 { padding: 1px 0 0 12px; font-weight: 500; }
.objwrap { display: flex; justify-content: space-between; margin-top: 4px; height: 204px; }
.objlist { padding: 7px 0 0 15px; font-size: 11.900px; line-height: 20px; letter-spacing: .1px; color: #444; }
.objlist div { height: 20px; display: flex; align-items: center; gap: 7px; white-space: nowrap; }
.objlist svg { width: 13px; height: 14px; fill: none; stroke: #666; overflow: visible; }

.canvas { width: 1139px; display: flex; background: linear-gradient(90deg, #fff 1100px, #f4f4f4 1100px); }
.leftcol { width: 481px; padding-top: 10px; }
.areatitle { width: 483px; height: 41px; margin-left: 1px; border: 5px solid #e15759; background: #faf; position: relative; }
.table { margin-top: 2px; position: relative; overflow: hidden; }
.rightcol { width: 658px; display: flex; flex-direction: column; }
.toprow { height: 312px; display: flex; }
.yield { width: 469px; padding-top: 5px; }
.yieldtitle { width: 467px; height: 53px; margin-left: 2px; border: 5px solid #edc948; background: #ff0; }
.season { position: relative; z-index: 1; }
.dserif { font-family: "DejaVu Serif", serif; font-weight: bold; }
.dsans { font-family: "DejaVu Sans", sans-serif; font-weight: bold; }
.nsans { font-family: "Noto Sans", sans-serif; font-weight: bold; }
.times { font-family: "Liberation Serif", serif; font-weight: bold; }
.osans { font-family: "Open Sans", sans-serif; }
.black { font-family: Inter, sans-serif; font-weight: 800; }
.label { font-family: "Open Sans", sans-serif; font-weight: 500; }

.tabs { height: 31px; display: grid; grid-template-columns: 131px 56px 75px 76px 102px 71px 56px 58px 56px 104px 73px 32px 32px 32px; background: #e6e6e6; border-top: 1px solid #ccc; font: 12px/30px Inter, sans-serif; letter-spacing: -.08px; color: #666; }
.tabs span { border-right: 1px solid #ccc; padding-left: 5px; display: flex; align-items: center; gap: 4px; white-space: nowrap; border-bottom: 1px solid #d0d0d0; }
.tabs span:nth-child(2) { padding-left: 6px; }
.tabs span:has(svg) { padding-left: 6px; }
.tabs .ds { padding-left: 10px; }
.tabs .active { background: #fafafa; font-weight: 500; color: #444; border-bottom-color: #fafafa; }
.tabs .new:has(svg) { padding-left: 9px; }
.status { height: 20px; display: flex; gap: 18px; background: #eaeaea; padding-left: 3px; font: 11px/20px Inter, sans-serif; letter-spacing: -.19px; color: #333; }
.status svg { margin-left: auto; }
.taskbar { height: 40px; display: flex; background: #303030; color: #fff; font-family: "Open Sans", sans-serif; }
.search { width: 344px; background: #f2f2f2; border-top: 1px solid #ccc; display: flex; align-items: center; padding: 0 14px 0 9px; color: #333; font-size: 14.500px; }
.search span { flex: 1; margin-left: 9px; letter-spacing: -.33px; }
.eng { width: 40px; padding-left: 4px; line-height: 40px; font-size: 12px; letter-spacing: -.3px; }
.clock { width: 71px; text-align: center; display: flex; flex-direction: column; font-size: 11.700px; line-height: 18px; padding: 2px 12px 0 0; letter-spacing: -.3px; }
```
